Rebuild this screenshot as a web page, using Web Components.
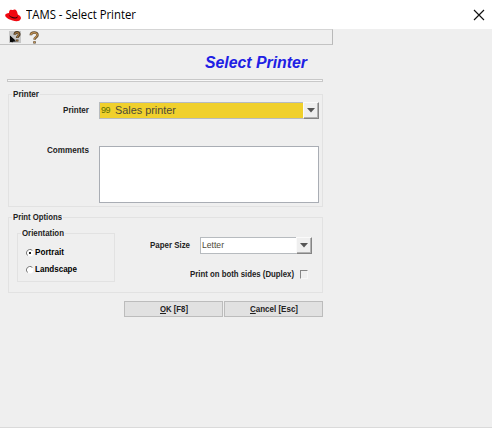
<!DOCTYPE html>
<html lang="en"><head><meta charset="utf-8"><title>TAMS - Select Printer</title>
<style>html,body{margin:0;height:100%;overflow:hidden;background:#efefef}</style></head><body>
<tams-window>
 <title-bar slot="title">TAMS - Select Printer</title-bar>
 <tool-bar slot="tools"></tool-bar>
 <page-heading>Select Printer</page-heading>
 <group-box label="Printer" style="--h:113px;--lw:26px">
  <form-row style="--top:2px;--lab:80px;--h:17px"><text-label slot="label" style="--w:26px">Printer</text-label><combo-box code="99" value="Sales printer" style="--w:220px;--bg:#f0d02c;--size:11px;--fw:61px"></combo-box></form-row>
  <form-row style="--top:27px;--lab:80px;--h:57px"><text-label slot="label" style="--w:42px;--pt:-1px">Comments</text-label><text-box></text-box></form-row>
 </group-box>
 <group-box label="Print Options" style="--h:76px;--gap:10px;--lw:49px">
  <options-layout>
   <group-box slot="left" label="Orientation" style="--h:49px;--gap:0px;--lw:42px">
    <radio-item checked style="--w:29px;--top:7px">Portrait</radio-item>
    <radio-item style="--w:42px;--top:4px">Landscape</radio-item>
   </group-box>
   <form-row style="--top:4px;--lab:75px;--h:17px"><text-label slot="label" style="--w:40px">Paper Size</text-label><combo-box value="Letter" style="--w:112px;--bg:#fff;--size:9px;--fw:22px"></combo-box></form-row>
   <check-item>Print on both sides (Duplex)</check-item>
  </options-layout>
 </group-box>
 <button-row><push-button key="O" style="--w:28px">K [F8]</push-button><push-button key="C" style="--w:48px">ancel [Esc]</push-button></button-row>
</tams-window>
<script>
const define=(name,html,setup)=>customElements.define(name,class extends HTMLElement{
 constructor(){super();this.attachShadow({mode:'open'}).innerHTML=html;}
 connectedCallback(){if(setup)setup(this,this.shadowRoot);}
});
const sizeOf=(host,name)=>parseFloat(getComputedStyle(host).getPropertyValue(name));
/* Condenses a label so that it takes exactly the width reserved for it. */
const fit=(el,width)=>{
 Object.assign(el.style,{display:'inline-block',justifySelf:'start',width:'max-content',flex:'none'});
 const w=el.getBoundingClientRect().width;
 Object.assign(el.style,{transformOrigin:'0 50%',transform:`scaleX(${width/w})`,marginRight:(width-w)+'px'});
};
const bold='font:bold 9px/11px "Liberation Sans",Arial,sans-serif;color:#222;white-space:nowrap;';
define('tams-window',`<style>:host{display:flex;flex-direction:column;box-sizing:border-box;height:428px;background:#efefef;border-bottom:1px solid #dadada}
main{width:315px;padding:0 0 0 8px}</style><slot name="title"></slot><slot name="tools"></slot><main><slot></slot></main>`);
define('title-bar',`<style>:host{display:flex;align-items:center;height:29px;flex:none;background:#fff;color:#000;font:12px/16px "Open Sans","Noto Sans",sans-serif;white-space:nowrap}
.hat{margin:1px 5px 0 5px;flex:none}.x{margin:0 7px 0 auto}</style>
<svg class="hat" width="16" height="13" viewBox="0 0 16 13"><path d="M4 4C4.2 1.5 5 .4 6.3.8c1 .4 1.5.2 2.4-.1C11.2.2 12 2.2 12.8 5.5 15 6.5 16.4 8 15.8 9.7 15 12.4 11.4 12.7 7.6 11.5 3.5 10.2.4 8.3.2 6.4.1 4.9 2 4.2 4 4z" fill="#f00710"/><path d="M3.8 4.5c-.4 1.4.8 2.5 3.2 3.3 2.2.8 5 .9 5.6-.2l.3-1.8c.3 2.4-.6 3.7-2.5 3.7C7.2 9.5 3.3 7.6 3.8 4.5z" fill="#2a0508"/></svg>
<span class="t"><slot></slot></span><svg class="x" width="12" height="12" viewBox="0 0 12 12"><path d="M1 1l10 10M11 1L1 11" stroke="#111" stroke-width="1.15"/></svg>`,(h,r)=>fit(r.querySelector('.t'),110));
define('tool-bar',`<style>:host{display:flex;box-sizing:border-box;width:333px;height:16px;flex:none;border-top:1px solid #d5d5d5;border-bottom:1px solid #c3c3c3;border-right:1px solid #b9b9b9;padding:1px 0 0 9px;gap:8px}svg{flex:none;overflow:visible}</style>
<svg width="12" height="13" viewBox="0 0 12 13"><path fill="#c6c6c6" d="M0 0h12v12H0z"/><path d="M5.8 3.8C5.8.6 10.3.5 10.2 3.3 10.2 5 8.3 5.2 8.2 7M8.1 8.6v2" fill="none" stroke="#4b3b27" stroke-width="2.7"/><path d="M5.8 3.6C6 .9 10 .9 9.9 3.3 9.9 4.8 8.2 5 8.1 6.7M8.1 8.9v1.4" fill="none" stroke="#a77b42" stroke-width="1.1"/><path d="M1 4.4l5.5 5-2.1.1L3.3 11.5 1 10z" fill="#080808"/><path d="M1 11V5l6 5.5z" fill="#080808"/></svg>
<svg width="11" height="13" viewBox="0 0 11 13"><path d="M1.8 4.3C1.8.5 8.6.5 8.5 4.1 8.5 6.3 5.6 6.2 5.5 8.6M5.5 10.2v2.4" fill="none" stroke="#59452d" stroke-width="2.5"/><path d="M1.8 3.9C2 1 8.4.8 8.3 4 8.2 6 5.4 6.1 5.4 8.3M5.4 10.6v1.5" fill="none" stroke="#c09153" stroke-width="1.3"/></svg>`);
define('page-heading',`<style>:host{display:flex;flex-direction:column;height:49px;align-items:flex-end}
.t{font:italic bold 16px/18px "Liberation Sans",Arial,sans-serif;color:#2020e4;white-space:nowrap}
.p{width:102px;margin:9px 16px 0 0;height:18px}
.r{box-sizing:border-box;width:316px;height:3px;border:1px solid #c8c8c8;background:#f8f8f8;margin-top:7px}</style><div class="p"><span class="t"><slot></slot></span></div><span class="r"></span>`,(h,r)=>fit(r.querySelector('.t'),102));
define('group-box',`<style>:host{display:block;box-sizing:border-box;height:var(--h);margin-top:var(--gap,0px);border:1px solid #e2e2e2}
.l{${bold}display:flex;width:fit-content;height:11px;margin:-6px 0 0 3px;padding:0 1px;background:#efefef}</style><div class="l"><span class="t"></span></div><slot></slot>`,(h,r)=>{
 const l=r.querySelector('.t');l.textContent=h.getAttribute('label');fit(l,sizeOf(h,'--lw'));});
define('form-row',`<style>:host{display:grid;grid-template-columns:var(--lab) 1fr;column-gap:10px;height:var(--h);margin-top:var(--top)}</style><slot name="label"></slot><slot></slot>`);
define('text-label',`<style>:host{display:flex;justify-content:flex-end;${bold}}.t{margin-top:var(--pt,3px)}</style><span class="t"><slot></slot></span>`,(h,r)=>fit(r.querySelector('.t'),sizeOf(h,'--w')));
define('combo-box',`<style>:host{display:flex;box-sizing:border-box;width:var(--w);height:17px;border:1px solid #b7bbbf;background:var(--bg);align-items:center;font:var(--size)/15px "Liberation Sans",Arial,sans-serif;color:#4e4a38;white-space:nowrap}
.c{font-size:9px;color:#5b6e00;width:14px;padding-left:1px;letter-spacing:-.5px}.c:empty{width:0}
.b{display:grid;place-items:center;box-sizing:border-box;width:16px;height:17px;margin:0 -1px 0 auto;background:#efefef;border:1px solid;border-color:#fafafa #858585 #858585 #fafafa;box-shadow:inset -1px -1px #b2b2b2}</style><span class="c"></span><span class="v"></span><span class="b"><svg width="8" height="5" viewBox="0 0 8 5"><path d="M0 0h8L4 4.5z" fill="#555"/></svg></span>`,(h,r)=>{
 r.querySelector('.c').textContent=h.getAttribute('code')||'';const v=r.querySelector('.v');v.textContent=h.getAttribute('value');
 fit(v,sizeOf(h,'--fw'));});
define('text-box',`<style>:host{display:block;box-sizing:border-box;width:220px;height:57px;border:1px solid #a9adb4;background:#fff}</style>`);
define('options-layout',`<style>:host{display:grid;grid-template-columns:98px 206px;padding:10px 0 0 8px}.right{min-width:0}</style><slot name="left"></slot><div class="right"><slot></slot></div>`);
define('radio-item',`<style>:host{display:flex;align-items:center;height:13px;margin:var(--top) 0 0 8px;${bold}color:#000}svg{flex:none;margin-right:1px}</style><svg width="8" height="8" viewBox="0 0 8 8"><circle cx="4" cy="4" r="3.4" fill="#fff"/><path d="M1.5 6.5A3.5 3.5 0 0 1 6.4 1.4" fill="none" stroke="#777"/><path class="d" d="M3 3h2v2H3z" fill="#222"/></svg><span class="t"><slot></slot></span>`,(h,r)=>{
 if(!h.hasAttribute('checked'))r.querySelector('.d').remove();fit(r.querySelector('.t'),sizeOf(h,'--w'));});
define('check-item',`<style>:host{display:flex;justify-content:flex-end;align-items:center;margin:14px 13px 0 0;height:12px;${bold}}
.b{box-sizing:border-box;width:8px;height:9px;margin-left:6px;border:1px solid;border-color:#858585 #f7f7f7 #f7f7f7 #858585}</style><span class="t"><slot></slot></span><span class="b"></span>`,(h,r)=>fit(r.querySelector('.t'),104));
define('button-row',`<style>:host{display:flex;justify-content:flex-end;gap:1px;margin-top:8px}</style><slot></slot>`);
define('push-button',`<style>:host{box-sizing:border-box;display:flex;align-items:center;justify-content:center;width:99px;height:16px;border:1px solid #bcbcbc;background:#e1e1e1;${bold}}u{text-underline-offset:1px}</style><span class="t"><u></u><slot></slot></span>`,(h,r)=>{
 r.querySelector('u').textContent=h.getAttribute('key');fit(r.querySelector('.t'),sizeOf(h,'--w'));});
</script></body></html>
